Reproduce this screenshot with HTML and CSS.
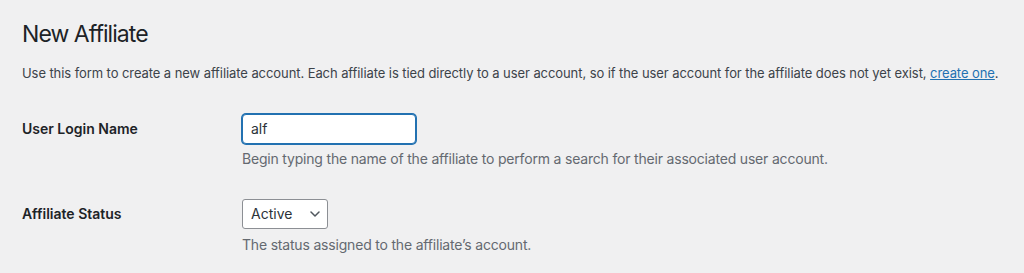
FILE: index.html
```html
<!DOCTYPE html>
<html lang="en">
<head>
<meta charset="utf-8">
<title>New Affiliate</title>
<link rel="stylesheet" href="styles.css">
</head>
<body>
<div class="wrap">
  <h1 class="page-title">New Affiliate</h1>
  <p class="intro">Use this form to create a new affiliate account. Each affiliate is tied directly to a user account, so if the user account for the affiliate does not yet exist, <a href="#" class="link">create one</a>.</p>
  <div class="form-grid">
    <div class="field-label">User Login Name</div>
    <div class="field">
      <input class="text-input" type="text" value="alf">
      <p class="description">Begin typing the name of the affiliate to perform a search for their associated user account.</p>
    </div>
    <div class="field-label">Affiliate Status</div>
    <div class="field">
      <div class="select-wrap">
        <select class="select"><option>Active</option></select>
        <svg class="chevron" width="10" height="6" viewBox="0 0 10 6"><path d="M1 1 L5 5 L9 1" fill="none" stroke="#50575e" stroke-width="1.5" stroke-linecap="round" stroke-linejoin="round"/></svg>
      </div>
      <p class="description desc-second">The status assigned to the affiliate’s account.</p>
    </div>
  </div>
</div>
</body>
</html>
```
FILE: styles.css
```css
html, body {
  margin: 0;
  padding: 0;
}
body {
  background: #f0f0f1;
  color: #3c434a;
  font-family: Inter, "Noto Sans", "Liberation Sans", sans-serif;
  font-size: 13px;
  line-height: 1.5;
}
.wrap {
  padding: 0 20px 0 22px;
}
.page-title {
  margin: 0;
  padding-top: 19px;
  font-size: 23px;
  font-weight: 400;
  line-height: 30px;
  letter-spacing: -0.95px;
  color: #1d2327;
}
.intro {
  margin: 15px 0 0;
  line-height: 19.5px;
  letter-spacing: -0.08px;
  white-space: nowrap;
}
.link {
  color: #2271b1;
  text-decoration: underline;
}
.form-grid {
  display: grid;
  grid-template-columns: 200px 1fr;
  column-gap: 20px;
  row-gap: 30px;
  margin-top: 30px;
}
.field-label {
  font-size: 14px;
  font-weight: 600;
  color: #1d2327;
  line-height: 30px;
}
.field {
  display: flex;
  flex-direction: column;
  align-items: flex-start;
}
.text-input {
  box-sizing: border-box;
  width: 174px;
  height: 30px;
  margin: 0;
  padding: 0 8px;
  border: 1px solid #2271b1;
  border-radius: 4px;
  box-shadow: 0 0 0 1px #2271b1;
  background: #fff;
  color: #2c3338;
  font-family: inherit;
  font-size: 14px;
  outline: none;
}
.description {
  margin: 5px 0 0;
  color: #646970;
  font-size: 14px;
  letter-spacing: -0.19px;
  line-height: 20px;
}
.desc-second {
  margin-top: 6px;
}
.select-wrap {
  position: relative;
}
.select {
  box-sizing: border-box;
  width: 86px;
  height: 30px;
  margin: 0;
  padding: 0 24px 0 8px;
  border: 1px solid #8c8f94;
  border-radius: 3px;
  background: #fff;
  color: #2c3338;
  font-family: inherit;
  font-size: 14px;
  -webkit-appearance: none;
  appearance: none;
}
.chevron {
  position: absolute;
  right: 8px;
  top: 12px;
  pointer-events: none;
}
```
